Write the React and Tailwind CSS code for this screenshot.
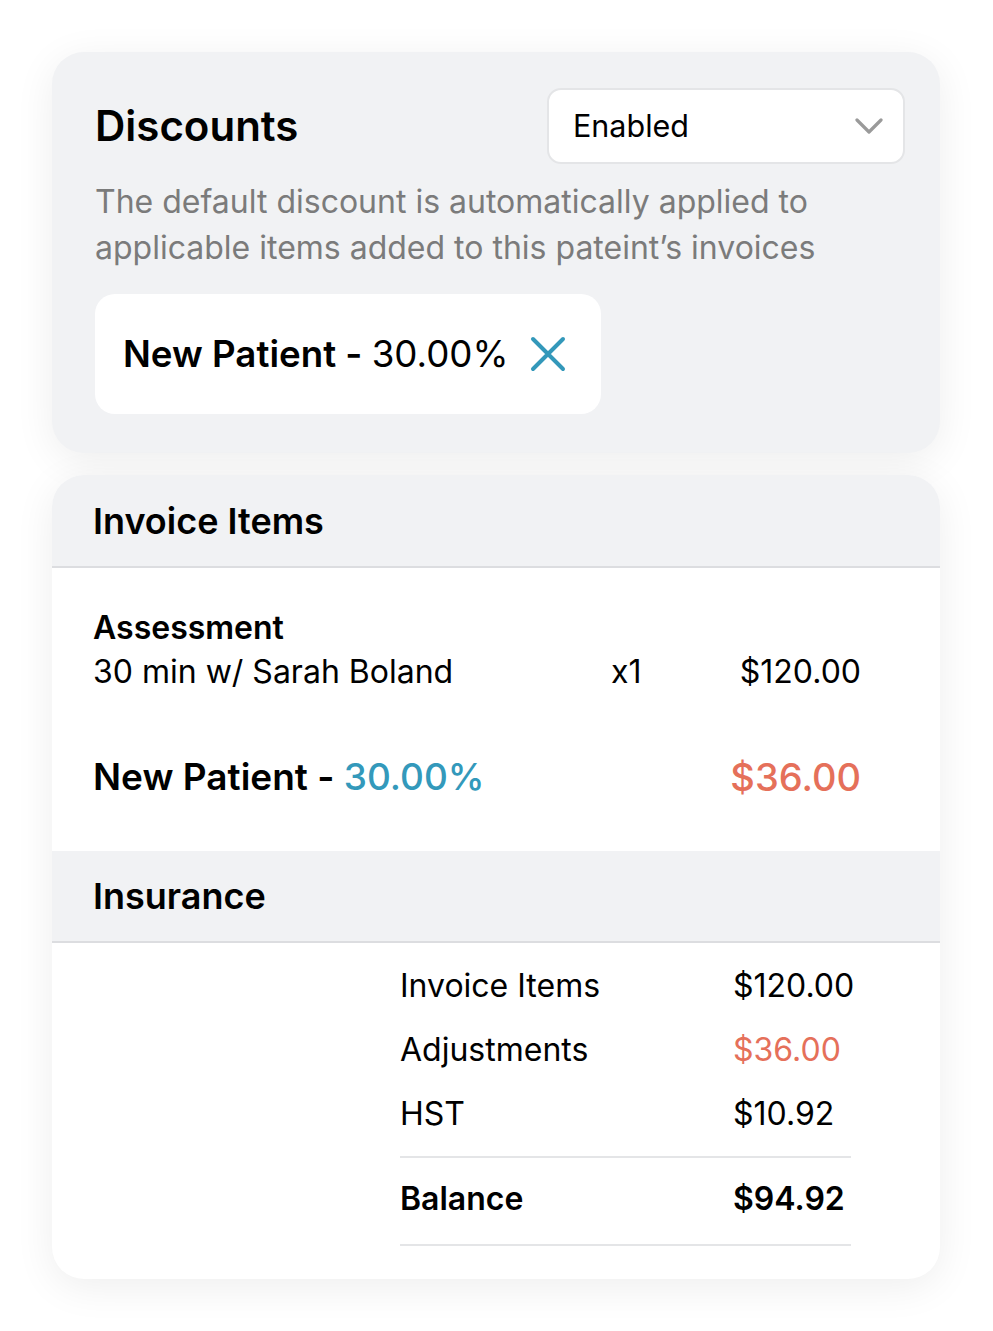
import React from 'react';

const font = { fontFamily: 'Inter, "Noto Sans", sans-serif' };

function Chevron() {
  return (
    <svg width="28" height="16" viewBox="0 0 28 16" fill="none">
      <path d="M2 2l12 12L26 2" stroke="#9a9a9a" strokeWidth="3.2" strokeLinecap="round" strokeLinejoin="round" />
    </svg>
  );
}

function CloseIcon() {
  return (
    <svg width="36" height="36" viewBox="0 0 36 36" fill="none">
      <path d="M3 3l30 30M33 3L3 33" stroke="#3398ba" strokeWidth="4" strokeLinecap="round" />
    </svg>
  );
}

function SummaryRow({ label, value, valueClass = 'text-black', bold }) {
  return (
    <div className={`grid grid-cols-[333px_1fr] text-[32px] leading-[44px] ${bold ? 'font-semibold' : ''}`}>
      <span className="text-black">{label}</span>
      <span className={valueClass}>{value}</span>
    </div>
  );
}

export default function App() {
  return (
    <div className="min-h-[1331px] w-[993px] bg-white pt-[52px] pl-[52px] pb-[53px]" style={font}>
      {/* Discounts card */}
      <section className="w-[888px] rounded-[32px] bg-[#f1f2f4] pl-[43px] pr-[35px] pt-[36px] pb-[39px] shadow-[0_8px_40px_rgba(0,0,0,0.07)]">
        <div className="flex items-center justify-between">
          <h2 className="text-[42px] font-semibold leading-[48px] text-black">Discounts</h2>
          <div className="flex h-[76px] w-[358px] items-center justify-between rounded-[14px] border-2 border-[#e4e5e7] bg-white pl-[24px] pr-[20px]">
            <span className="text-[30.5px] leading-[40px] text-black">Enabled</span>
            <Chevron />
          </div>
        </div>
        <p className="mt-[15px] text-[32px] leading-[46px] text-[#7b7b7b]">
          The default discount is automatically applied to
          <br />
          applicable items added to this pateint’s invoices
        </p>
        <div className="mt-[23px] flex h-[120px] w-[506px] items-center gap-[22px] rounded-[20px] bg-white pl-[28px]">
          <span className="text-[36.7px] leading-[44px] text-black">
            <span className="font-semibold">New Patient - </span>30.00%
          </span>
          <CloseIcon />
        </div>
      </section>

      {/* Invoice card */}
      <section className="mt-[22px] w-[888px] overflow-hidden rounded-[32px] bg-white shadow-[0_8px_40px_rgba(0,0,0,0.07)]">
        <div className="flex h-[93px] items-center border-b-2 border-[#dcdde0] bg-[#f1f2f4] pl-[41px]">
          <h3 className="text-[36px] font-semibold leading-[44px] text-black">Invoice Items</h3>
        </div>
        <div className="pl-[41px] pr-[79px] pt-[38px] pb-[52px]">
          <div className="text-[32px] font-semibold leading-[44px] text-black">Assessment</div>
          <div className="grid grid-cols-[518px_1fr_auto] text-[32px] leading-[44px] text-black">
            <span>30 min w/ Sarah Boland</span>
            <span>x1</span>
            <span className="text-right">$120.00</span>
          </div>
          <div className="mt-[61px] flex items-center justify-between text-[37px] font-semibold leading-[44px]">
            <span className="text-black">
              New Patient - <span className="font-medium text-[#3399bb]">30.00%</span>
            </span>
            <span className="text-[38px] font-medium text-[#e5705a]">$36.00</span>
          </div>
        </div>

        <div className="flex h-[92px] items-center border-b-2 border-[#dcdde0] bg-[#f1f2f4] pl-[41px]">
          <h3 className="text-[36px] font-semibold leading-[44px] text-black">Insurance</h3>
        </div>
        <div className="ml-[348px] w-[451px] pt-[21px] pb-[33px]">
          <div className="flex flex-col gap-[20px]">
            <SummaryRow label="Invoice Items" value="$120.00" />
            <SummaryRow label="Adjustments" value="$36.00" valueClass="text-[#e5705a]" />
            <SummaryRow label="HST" value="$10.92" />
          </div>
          <div className="mt-[20px] border-t-2 border-[#e4e5e7] pt-[19px] pb-[23px]">
            <SummaryRow label="Balance" value="$94.92" bold />
          </div>
          <div className="border-t-2 border-[#e4e5e7]" />
        </div>
      </section>
    </div>
  );
}
